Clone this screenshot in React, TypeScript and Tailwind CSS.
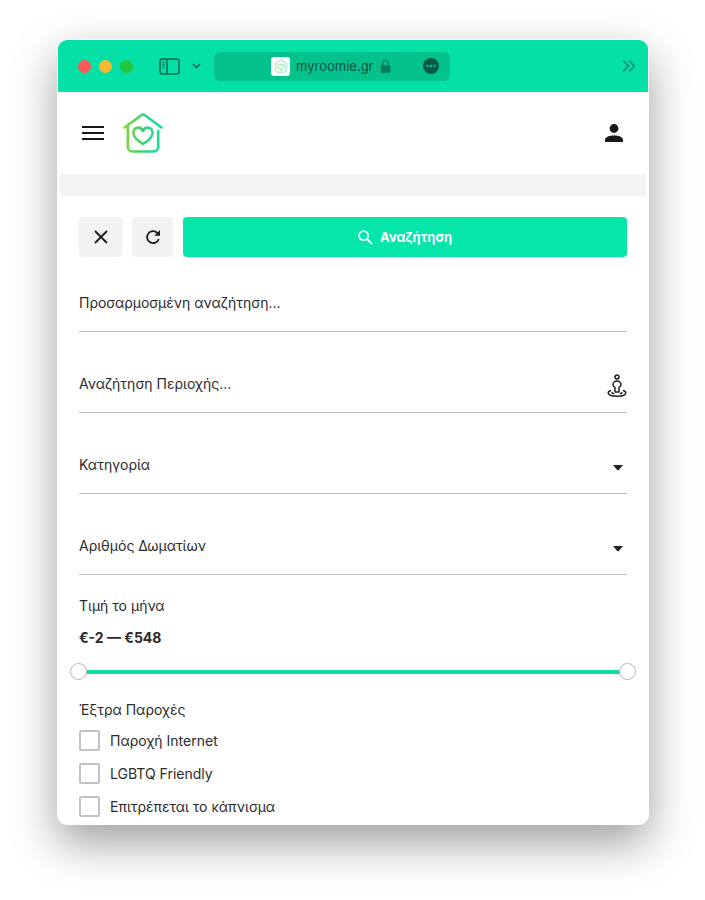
import React, { useState } from 'react';

const ROOMS = ['1', '2', '3', '4+'];
const CATEGORIES = ['Διαμέρισμα', 'Δωμάτιο', 'Στούντιο'];
const AMENITIES = ['Παροχή Internet', 'LGBTQ Friendly', 'Επιτρέπεται το κάπνισμα'];

const PRICE_MIN = -2;
const PRICE_MAX = 548;

const HouseLogo: React.FC<{ id: string; className?: string }> = ({ id, className }) => (
  <svg viewBox="0 0 42 42" fill="none" className={className} aria-hidden="true">
    <defs>
      <linearGradient id={id} x1="0" y1="0" x2="42" y2="0" gradientUnits="userSpaceOnUse">
        <stop offset="0" stopColor="#8fd433" />
        <stop offset="0.5" stopColor="#3ad17a" />
        <stop offset="1" stopColor="#0fdfa4" />
      </linearGradient>
    </defs>
    <g stroke={`url(#${id})`} strokeWidth="2.6" strokeLinecap="round" strokeLinejoin="round">
      <path d="M2.5 15.5 19.2 3.2a3 3 0 0 1 3.6 0L39.5 15.5" />
      <path d="M5.8 13.5V35a4.5 4.5 0 0 0 4.5 4.5h21.4a4.5 4.5 0 0 0 4.5-4.5V19" />
      <path d="M21 32c-4-2.4-9.6-6-9.6-11.3 0-3 2.2-5.1 4.8-5.1 2.2 0 3.9 1.3 4.800 3.400.9-2.100 2.600-3.400 4.800-3.400 2.600 0 4.800 2.100 4.800 5.100C30.600 26 25 29.600 21 32Z" />
    </g>
  </svg>
);

const TitleBar: React.FC = () => (
  <div className="flex h-[52px] items-center rounded-t-[9px] bg-[#04e0a6] pl-5 pr-3">
    <div className="flex gap-2">
      <span className="size-[13px] rounded-full bg-[#fb5c57]" />
      <span className="size-[13px] rounded-full bg-[#f8b92d]" />
      <span className="size-[13px] rounded-full bg-[#24c63d]" />
    </div>
    <button type="button" aria-label="Sidebar" className="ml-[26px]">
      <svg viewBox="0 0 21 17" className="h-[17px] w-[21px]" fill="none" stroke="#03684a" strokeWidth="1.5">
        <rect x="1" y="1" width="19" height="15" rx="2.5" />
        <path d="M8 1v15M3.500 4.500h2M3.500 7h2M3.500 9.500h2" />
      </svg>
    </button>
    <button type="button" aria-label="Tab groups" className="ml-3">
      <svg viewBox="0 0 9 6" className="h-[6px] w-[9px]" fill="none" stroke="#03684a" strokeWidth="1.6" strokeLinecap="round">
        <path d="m1.500 1.500 3 3 3-3" />
      </svg>
    </button>
    <div className="ml-[13px] flex h-[29px] w-[236px] items-center rounded-md bg-[#04c28c] pl-[57px] pr-[11px]">
      <span className="flex size-[19px] items-center justify-center rounded-[3px] bg-white">
        <HouseLogo id="favicon" className="size-[14px] opacity-70" />
      </span>
      <span className="ml-[6px] text-[13px] text-[#04523c]">myroomie.gr</span>
      <svg viewBox="0 0 11 14" className="ml-[6px] h-[14px] w-[11px]" aria-hidden="true">
        <rect x="0.500" y="6" width="10" height="8" rx="1.500" fill="#04805d" />
        <path d="M2.800 6.500V4a2.700 2.700 0 0 1 5.400 0v2.500" fill="none" stroke="#04805d" strokeWidth="1.300" />
      </svg>
      <button type="button" aria-label="Page menu" className="ml-auto">
        <svg viewBox="0 0 16 16" className="size-4">
          <circle cx="8" cy="8" r="8" fill="#045a42" />
          <g fill="#04c28c">
            <circle cx="4.500" cy="8" r="1.200" />
            <circle cx="8" cy="8" r="1.200" />
            <circle cx="11.500" cy="8" r="1.200" />
          </g>
        </svg>
      </button>
    </div>
    <button type="button" aria-label="More" className="ml-auto">
      <svg viewBox="0 0 14 12" className="h-3 w-[14px]" fill="none" stroke="#048a64" strokeWidth="1.500" strokeLinecap="round" strokeLinejoin="round">
        <path d="m1.500 1 5 5-5 5M7.500 1l5 5-5 5" />
      </svg>
    </button>
  </div>
);

const SiteHeader: React.FC = () => (
  <header className="flex h-[82px] items-center pl-6 pr-6">
    <button type="button" aria-label="Menu">
      <svg viewBox="0 0 22 16" className="h-4 w-[22px]" stroke="#15171c" strokeWidth="2">
        <path d="M0 2h22M0 8h22M0 14h22" />
      </svg>
    </button>
    <a href="#" aria-label="myroomie" className="ml-[18px]">
      <HouseLogo id="logo" className="size-[42px]" />
    </a>
    <button type="button" aria-label="Account" className="ml-auto">
      <svg viewBox="0 0 20 18" className="h-[18px] w-5" fill="#17191d">
        <circle cx="10" cy="4.500" r="4.400" />
        <path d="M1 18v-2.200C1 12.800 5.500 11.400 10 11.400s9 1.400 9 4.400V18Z" />
      </svg>
    </button>
  </header>
);

const SelectField: React.FC<{ id: string; label: string; options: string[] }> = ({
  id,
  label,
  options,
}) => (
  <div className="relative border-b border-[#bdbdbd] pb-[2px]">
    <select id={id} aria-label={label} className="block h-[53px] w-full appearance-none bg-transparent pr-8 outline-none">
      <option>{label}</option>
      {options.map((option) => (
        <option key={option}>{option}</option>
      ))}
    </select>
    <svg viewBox="0 0 10 6" className="pointer-events-none absolute right-1 top-[27px] h-[6px] w-[10px]" fill="#222">
      <path d="M0 0h10L6 4.800q-1 1-2 0Z" />
    </svg>
  </div>
);

const RANGE_CLASS =
  'pointer-events-none absolute inset-0 h-[17px] w-full appearance-none bg-transparent outline-none [&::-webkit-slider-thumb]:pointer-events-auto [&::-webkit-slider-thumb]:size-[17px] [&::-webkit-slider-thumb]:appearance-none [&::-webkit-slider-thumb]:rounded-full [&::-webkit-slider-thumb]:border [&::-webkit-slider-thumb]:border-[#b5b5b5] [&::-webkit-slider-thumb]:bg-white';

const PriceRange: React.FC = () => {
  const [low, setLow] = useState(PRICE_MIN);
  const [high, setHigh] = useState(PRICE_MAX);

  return (
    <fieldset className="mt-[21px]">
      <legend className="leading-5">Τιμή το μήνα</legend>
      <p className="mt-3 font-bold leading-5">
        €{low} — €{high}
      </p>
      <div className="relative -mx-[9px] mt-[15px] flex h-[17px] items-center px-[9px]">
        <div className="h-1 w-full bg-[#14dca4]" />
        <input
          type="range"
          aria-label="Ελάχιστη τιμή"
          min={PRICE_MIN}
          max={PRICE_MAX}
          value={low}
          onChange={(e) => setLow(Math.min(Number(e.target.value), high))}
          className={RANGE_CLASS}
        />
        <input
          type="range"
          aria-label="Μέγιστη τιμή"
          min={PRICE_MIN}
          max={PRICE_MAX}
          value={high}
          onChange={(e) => setHigh(Math.max(Number(e.target.value), low))}
          className={RANGE_CLASS}
        />
      </div>
    </fieldset>
  );
};

const App: React.FC = () => {
  return (
    <div className="min-h-screen bg-white pb-[74px] pl-[57px] pr-14 pt-[39px] font-['Inter','Liberation_Sans',sans-serif] text-sm text-[#2b2b2b]">
      <div className="rounded-[10px] border border-white bg-white shadow-[0_18px_45px_rgba(0,0,0,0.38)]">
        <TitleBar />
        <SiteHeader />
        <div className="mx-[2px] h-[22px] bg-[#f3f3f3]" />

        <form className="px-[21px] pb-[7px] pt-[21px]" onSubmit={(e) => e.preventDefault()}>
          {/* Actions */}
          <div className="flex h-10 gap-[10px]">
            <button type="button" aria-label="Κλείσιμο" className="flex w-[43px] items-center justify-center rounded bg-[#f2f2f2]">
              <svg viewBox="0 0 14 14" className="size-[14px]" stroke="#1c1c1c" strokeWidth="1.800">
                <path d="m1 1 12 12M13 1 1 13" />
              </svg>
            </button>
            <button type="reset" aria-label="Επαναφορά" className="flex w-[41px] items-center justify-center rounded bg-[#f2f2f2]">
              <svg viewBox="0 0 16 16" className="size-4" fill="none" stroke="#1c1c1c" strokeWidth="1.800">
                <path d="M13.800 10A6 6 0 1 1 12.400 3.900L14 5.500" />
                <path d="M15 1v5.800H9.200Z" fill="#1c1c1c" stroke="none" />
              </svg>
            </button>
            <button type="submit" className="flex flex-1 items-center justify-center gap-[7px] rounded bg-[#05e6ab] text-[13px] font-bold text-white">
              <svg viewBox="0 0 15 15" className="size-[15px]" fill="none" stroke="currentColor" strokeWidth="1.800">
                <circle cx="5.600" cy="5.600" r="4.500" />
                <path d="m9 9 5 5" />
              </svg>
              Αναζήτηση
            </button>
          </div>

          {/* Filters */}
          <div className="mt-[19px] flex flex-col gap-[25px]">
            <div className="border-b border-[#bdbdbd] pb-[2px]">
              <input
                type="text"
                aria-label="Προσαρμοσμένη αναζήτηση"
                placeholder="Προσαρμοσμένη αναζήτηση..."
                className="block h-[53px] w-full bg-transparent outline-none placeholder:text-[#2b2b2b]"
              />
            </div>
            <div className="flex items-center border-b border-[#bdbdbd] pb-[2px]">
              <input
                type="text"
                aria-label="Αναζήτηση Περιοχής"
                placeholder="Αναζήτηση Περιοχής..."
                className="block h-[53px] min-w-0 flex-1 bg-transparent outline-none placeholder:text-[#2b2b2b]"
              />
              <button type="button" aria-label="Η τοποθεσία μου" className="mt-1">
                <svg viewBox="0 0 20 24" className="h-6 w-5" fill="none" stroke="#222" strokeWidth="1.500">
                  <circle cx="10" cy="3" r="2" />
                  <path d="M8 18v-4.500C6.500 12.500 6 11.500 6 10.500a4 3.600 0 0 1 8 0c0 1-.5 2-2 3V18Z" strokeLinejoin="round" />
                  <path d="M4 16.500c-1.800.5-2.800 1.200-2.800 2.200C1.200 20.800 5 22.200 10 22.200s8.800-1.400 8.800-3.500c0-1-1-1.700-2.800-2.200" />
                  <path d="m4.500 18.500 2.500 1.300M15.500 18.500 13 19.800" />
                </svg>
              </button>
            </div>
            <SelectField id="category" label="Κατηγορία" options={CATEGORIES} />
            <SelectField id="rooms" label="Αριθμός Δωματίων" options={ROOMS} />
          </div>

          <PriceRange />

          {/* Amenities */}
          <fieldset className="mt-5">
            <legend className="leading-5">Έξτρα Παροχές</legend>
            <div className="mt-[10px] flex flex-col gap-3">
              {AMENITIES.map((amenity) => (
                <label key={amenity} className="flex h-[21px] items-center gap-[10px]">
                  <input
                    type="checkbox"
                    className="size-[21px] appearance-none rounded-[2px] border-2 border-[#c2c2c2] bg-white checked:bg-[#05e6ab]"
                  />
                  {amenity}
                </label>
              ))}
            </div>
          </fieldset>
        </form>
      </div>
    </div>
  );
};

export default App;
